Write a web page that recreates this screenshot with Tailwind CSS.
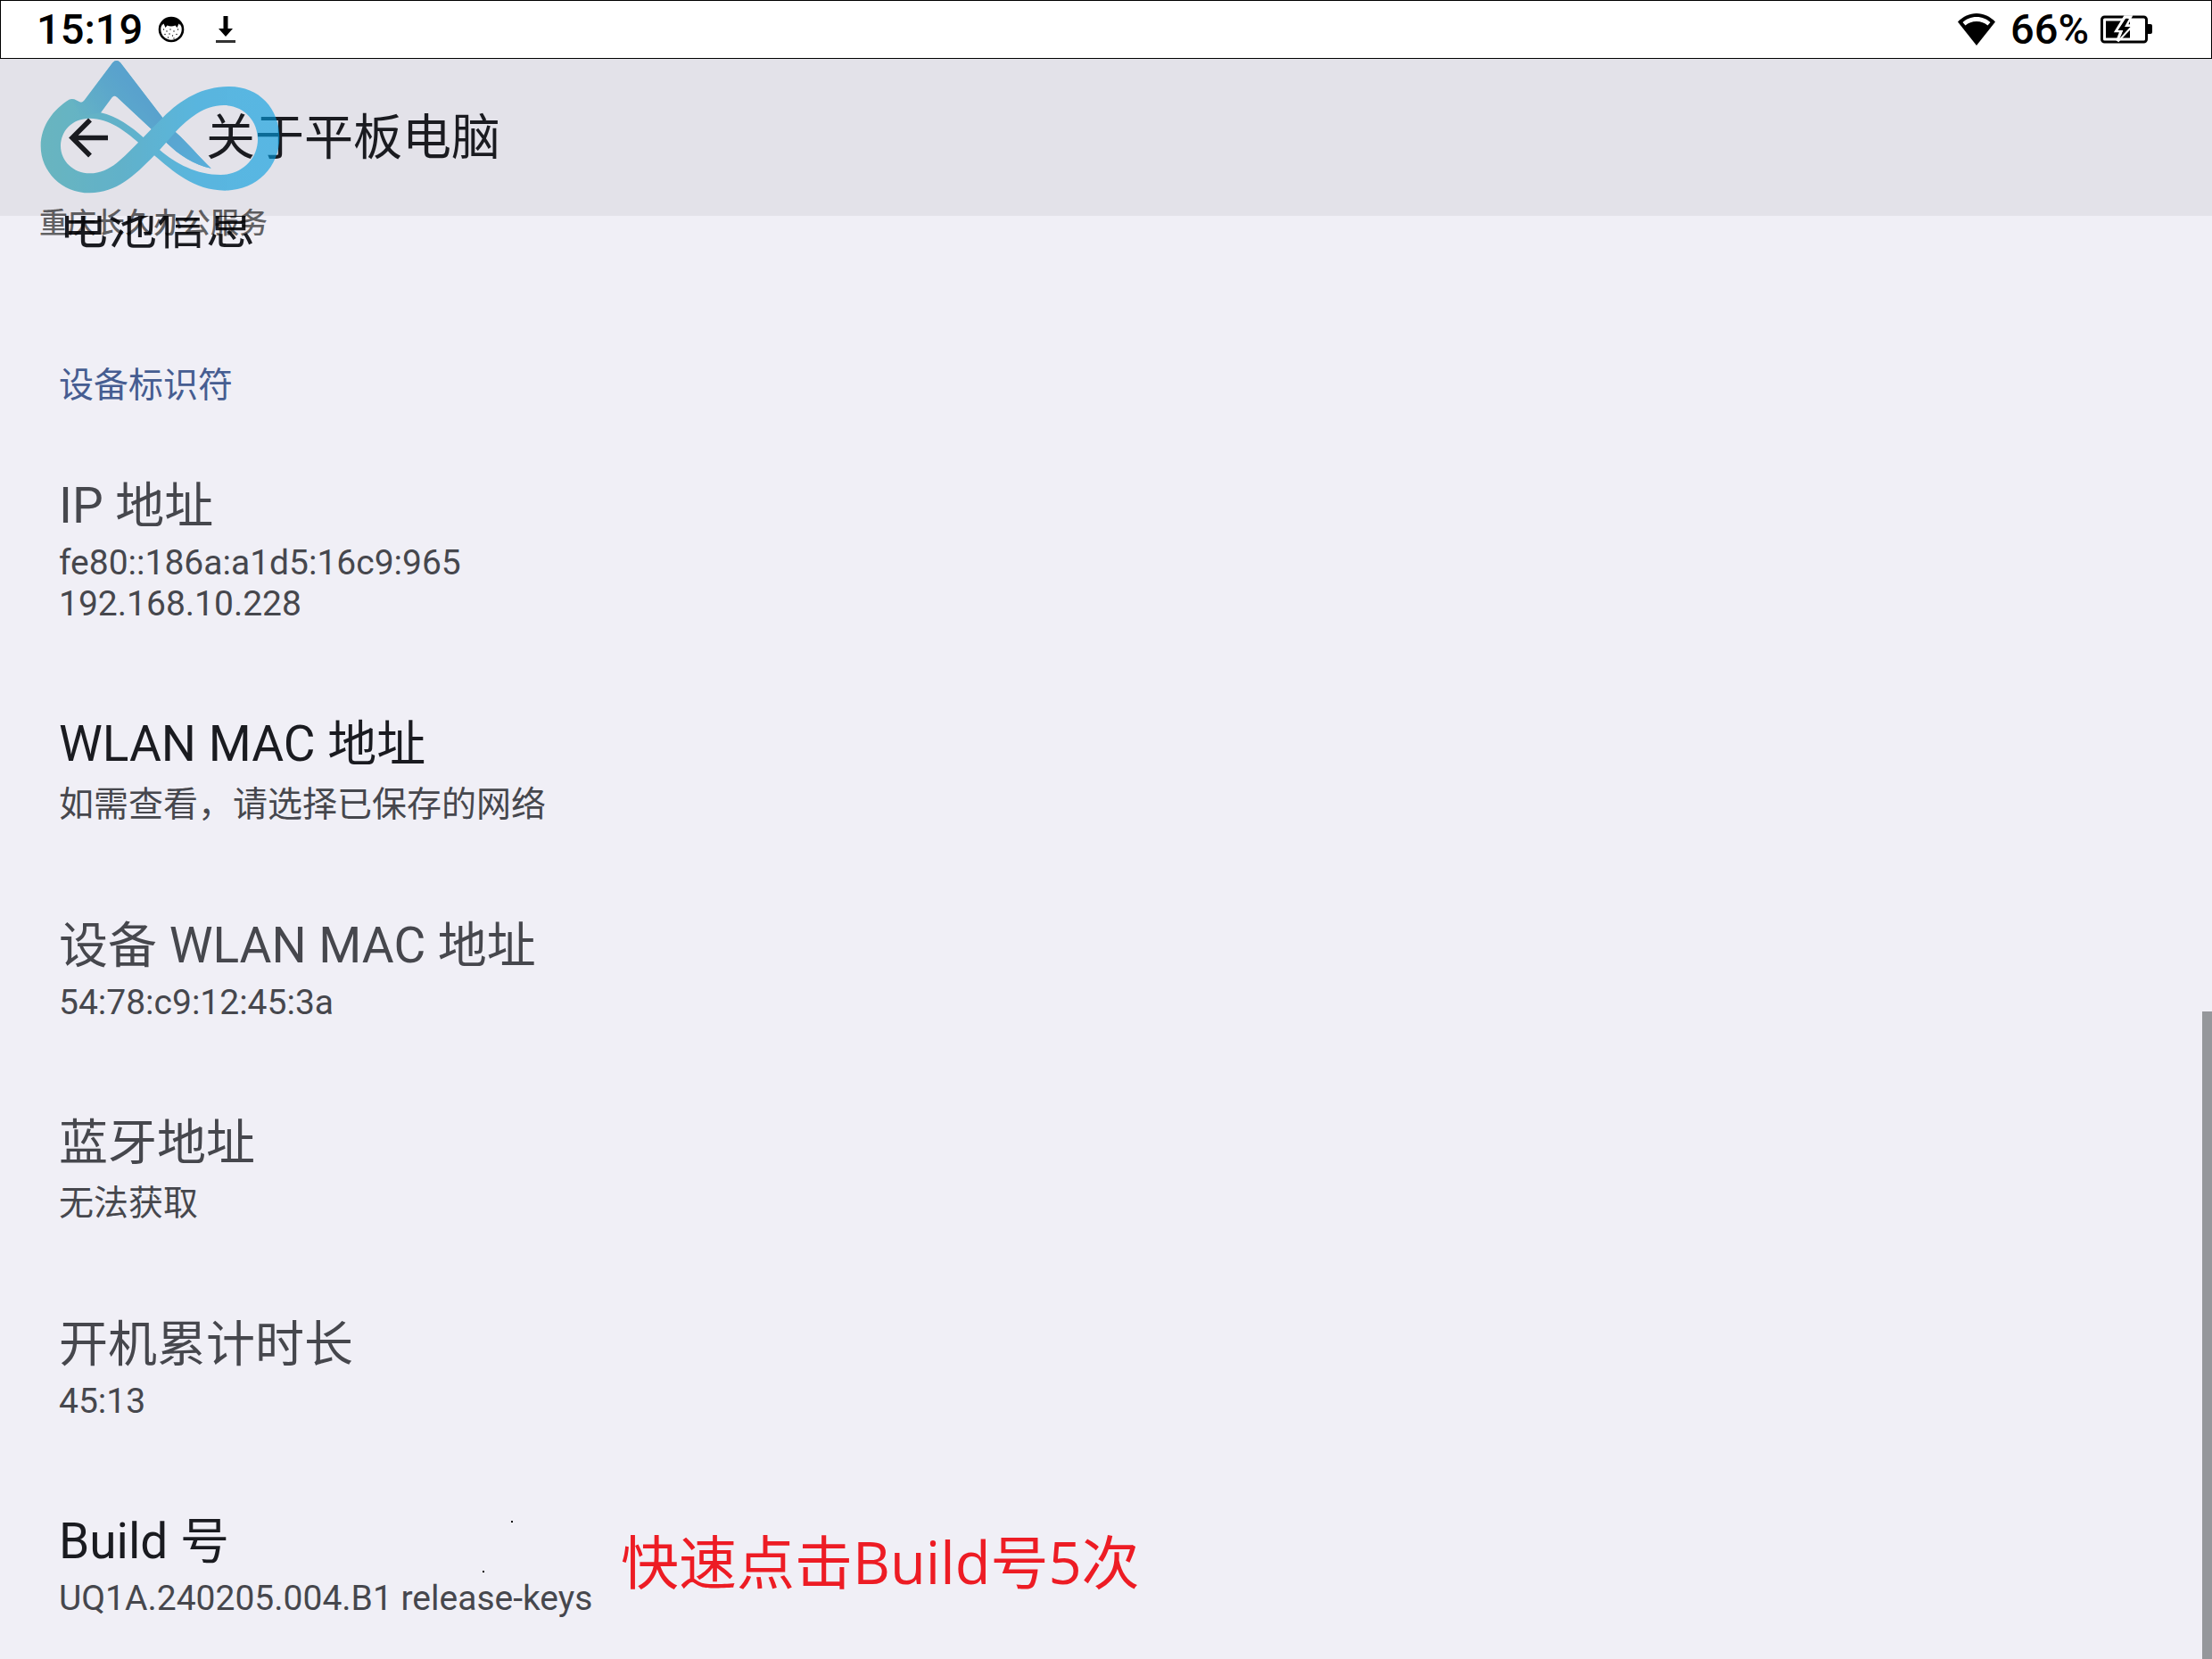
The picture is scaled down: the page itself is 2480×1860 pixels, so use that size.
<!DOCTYPE html>
<html lang="zh-CN">
<head>
  <meta charset="UTF-8" />
  <meta name="viewport" content="width=device-width, initial-scale=1.0" />
  <title>关于平板电脑</title>
  <script src="https://cdn.jsdelivr.net/npm/@tailwindcss/browser@4"></script>
  <style>
    body {
      font-family: Roboto, "Noto Sans CJK SC", sans-serif;
    }
  </style>
</head>
<body class="relative h-screen flex flex-col overflow-hidden bg-[#f0eff6] text-[#1a1b20]">

  <!-- STATUS BAR -->
  <div class="relative z-10 shrink-0 h-[66px] flex items-center justify-between pl-[40px] pr-[66px] bg-white border border-black text-black text-[47px] leading-[56px] font-medium">
    <div class="flex items-center">
      <span>15:19</span>
      <svg class="w-[30px] h-[30px] ml-[17px]" viewBox="0 0 30 30">
        <circle cx="15" cy="15" r="13" fill="#fff" stroke="#000" stroke-width="2.6" />
        <path d="M4 11 Q6 2 15 2 Q24 2 26 11 L23.500 8.500 L21.500 13 L19.500 10.500 Q15 12.500 10.500 10.500 L8.500 13 L6.500 8.500 Z" fill="#000" />
        <g fill="#000">
          <circle cx="6.500" cy="15" r=".7" /><circle cx="10" cy="17" r=".7" /><circle cx="14" cy="15" r=".7" />
          <circle cx="18" cy="17" r=".7" /><circle cx="22.500" cy="15" r=".7" /><circle cx="8" cy="20.500" r=".7" />
          <circle cx="13" cy="20" r=".7" /><circle cx="16.500" cy="22" r=".7" /><circle cx="21" cy="20.500" r=".7" />
          <circle cx="11.500" cy="24" r=".7" /><circle cx="18" cy="25" r=".7" />
        </g>
      </svg>
      <svg class="w-[24px] h-[32px] ml-[34px]" viewBox="0 0 24 32">
        <path d="M9.500 1 H14.500 V15 H20 L12 24 L4 15 H9.500 Z" fill="#000" />
        <rect x="1" y="28" width="22" height="3" fill="#333" />
      </svg>
    </div>
    <div class="flex items-center">
      <svg class="w-[42px] h-[36px] mr-[17px]" viewBox="0 0 42 36">
        <path d="M21 0 C13 0 6 3.500 0 9.500 L21 36 L42 9.500 C36 3.500 29 0 21 0 Z" fill="#000" />
        <path d="M21 4 C14.500 4 9.500 6.500 5.500 10 L8.500 13.500 C12 10.500 16 9 21 9 C26 9 30 10.500 33.500 13.500 L36.500 10 C32.500 6.500 27.500 4 21 4 Z" fill="#fff" />
      </svg>
      <span>66%</span>
      <svg class="w-[58px] h-[32px] ml-[13px]" viewBox="0 0 58 32">
        <rect x="1.500" y="2" width="50" height="28" rx="3" fill="#fff" stroke="#000" stroke-width="3" />
        <path d="M53 10 H56 Q58 10 58 12 V19 Q58 21 56 21 H53 Z" fill="#000" />
        <rect x="6" y="6.500" width="27" height="19" fill="#000" />
        <path d="M27.500 2 L18 17.500 H23.500 L19 29 L35 12 H28.500 L33.500 2 Z" fill="#000" stroke="#fff" stroke-width="3.500" />
        <path d="M28 4 L19.500 17 H25.500 L21.500 26 L33.500 13 H27 L32 4 Z" fill="#000" />
      </svg>
    </div>
  </div>

  <!-- APP BAR -->
  <header class="relative z-10 shrink-0 h-[176px] flex items-center gap-[109px] pl-[77px] bg-[#e3e2e9]">
    <button type="button" aria-label="返回" class="shrink-0">
      <svg class="w-[45px] h-[45px]" viewBox="0 0 45 45" fill="none" stroke="#1a1b20" stroke-width="5.500">
        <path d="M44 22.500 H5 M24 2.500 L4 22.500 L24 42.500" />
      </svg>
    </button>
    <h1 class="text-[55px] leading-[65px]">关于平板电脑</h1>
  </header>

  <!-- LIST, scrolled so that its first row slides under the app bar -->
  <main class="flex-1 min-h-0">
    <section class="-mt-[71px] px-[66px]">
      <div class="py-[51px]">
        <h3 class="text-[55px] leading-[65px]">电池信息</h3>
      </div>
    </section>

    <section class="px-[66px]">
      <h2 class="pt-[67px] pb-[25px] text-[39px] leading-[54px] text-[#465d91]">设备标识符</h2>

      <div class="flex flex-col gap-2 py-[51px] text-[#46474d]">
        <h3 class="text-[55px] leading-[65px]">IP 地址</h3>
        <p class="text-[39px] leading-[46px]">fe80::186a:a1d5:16c9:965<br />192.168.10.228</p>
      </div>

      <div class="flex flex-col gap-2 pt-[51px] pb-[48px]">
        <h3 class="text-[55px] leading-[65px]">WLAN MAC 地址</h3>
        <p class="text-[39px] leading-[54px] text-[#46474d]">如需查看，请选择已保存的网络</p>
      </div>

      <div class="flex flex-col gap-2 py-[51px] text-[#46474d]">
        <h3 class="text-[55px] leading-[65px]">设备 WLAN MAC 地址</h3>
        <p class="text-[39px] leading-[46px]">54:78:c9:12:45:3a</p>
      </div>

      <div class="flex flex-col gap-2 pt-[51px] pb-[48px] text-[#46474d]">
        <h3 class="text-[55px] leading-[65px]">蓝牙地址</h3>
        <p class="text-[39px] leading-[54px]">无法获取</p>
      </div>

      <div class="flex flex-col gap-2 py-[51px] text-[#46474d]">
        <h3 class="text-[55px] leading-[65px]">开机累计时长</h3>
        <p class="text-[39px] leading-[46px]">45:13</p>
      </div>

      <div class="relative flex flex-col gap-2 py-[51px]">
        <h3 class="text-[55px] leading-[65px]">Build 号</h3>
        <p class="text-[39px] leading-[46px] text-[#46474d]">UQ1A.240205.004.B1 release-keys</p>
        <!-- red note beside the build number -->
        <p class="absolute left-[630px] top-[63px] whitespace-nowrap text-[65px] leading-[86px] text-[#ed1c24] font-['Open_Sans','Noto_Sans_CJK_SC',sans-serif]">快速点击Build号5次</p>
        <span class="absolute left-[507px] top-[60px] size-[2px] bg-black"></span>
        <span class="absolute left-[475px] top-[116px] size-[2px] bg-black"></span>
      </div>
    </section>
  </main>

  <!-- SCROLLBAR -->
  <div class="absolute z-10 right-0 top-[1134px] bottom-0 w-[11px] bg-[#95979b]"></div>

  <!-- WATERMARK -->
  <div class="absolute z-20 left-[44px] top-[67px] pointer-events-none">
    <svg class="w-[270px] h-[150px]" viewBox="40 50 810 450">
      <defs>
        <linearGradient id="loop" gradientUnits="userSpaceOnUse" x1="45" y1="0" x2="848" y2="0">
          <stop offset="0" stop-color="#1f9aa6" />
          <stop offset="0.35" stop-color="#1294b8" />
          <stop offset="0.65" stop-color="#069bd8" />
          <stop offset="1" stop-color="#029ce0" />
        </linearGradient>
        <linearGradient id="peak" gradientUnits="userSpaceOnUse" x1="330" y1="120" x2="180" y2="250">
          <stop offset="0" stop-color="#067cbc" />
          <stop offset="1" stop-color="#067cbc" stop-opacity="0" />
        </linearGradient>
        <linearGradient id="tail" gradientUnits="userSpaceOnUse" x1="470" y1="300" x2="618" y2="415">
          <stop offset="0" stop-color="#067fc0" />
          <stop offset="1" stop-color="#0590d2" />
        </linearGradient>
      </defs>
      <g opacity="0.62">
        <path fill="url(#loop)" fill-rule="evenodd" d="M287 60 Q300 46 313 60 L455 245 C520 180 590 140 680 140 C780 140 848 215 848 312 C848 410 770 490 665 490 C560 490 490 425 427 372 C360 440 300 498 210 498 C115 498 45 425 45 340 C45 270 90 215 140 184 Q148 180 158 183 L176 192 Q185 196 192 186 Z
          M112 340 C112 390 155 432 210 432 C280 432 325 375 373 328 C330 290 275 247 210 247 C150 247 112 290 112 340 Z
          M285 176 L247 228 C300 240 350 275 390 311 L417 283 L302 176 Q293 167 285 176 Z
          M498 293 C545 245 595 203 660 203 C728 203 775 255 775 318 C775 385 720 437 650 437 C570 437 500 400 445 353 L467 328 C510 370 560 403 618 415 C580 380 540 330 498 293 Z" />
        <path fill="url(#peak)" d="M287 60 Q300 46 313 60 L455 245 L417 283 L302 176 Q293 167 285 176 L247 228 L180 240 L150 182 L176 192 Q185 196 192 186 Z" />
        <path fill="url(#tail)" d="M498 293 L467 328 C510 370 560 403 618 415 C580 380 540 330 498 293 Z" />
      </g>
    </svg>
    <p class="mt-[10px] text-[32px] leading-[46px] font-medium text-black/60 whitespace-nowrap">重庆长久办公服务</p>
  </div>

</body>
</html>
